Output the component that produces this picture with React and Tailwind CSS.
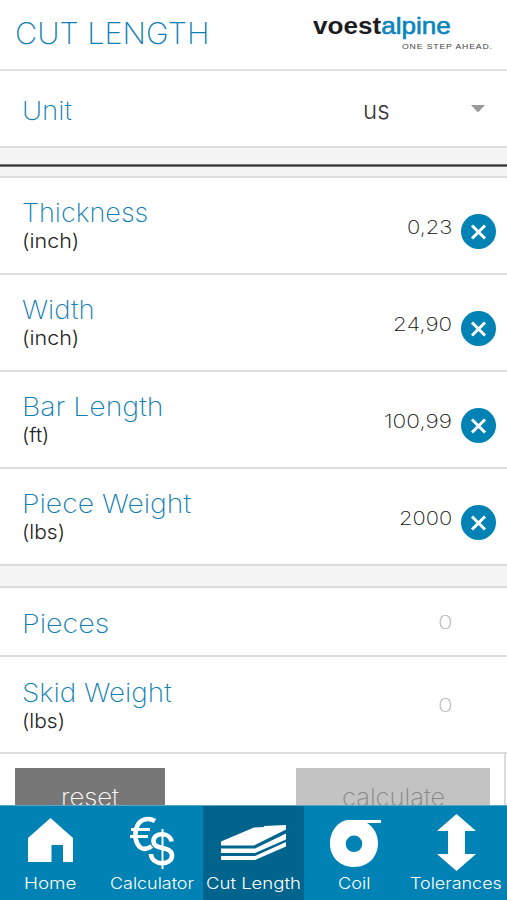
import { useLayoutEffect, useRef, useState } from "react";

const inputs = [
  { label: "Thickness", unit: "(inch)", value: "0,23", w: 126, uw: 57, vw: 45 },
  { label: "Width", unit: "(inch)", value: "24,90", w: 73, uw: 57, vw: 59 },
  { label: "Bar Length", unit: "(ft)", value: "100,99", w: 141, uw: 27, vw: 68 },
  { label: "Piece Weight", unit: "(lbs)", value: "2000", w: 169, uw: 43, vw: 53 },
];

// Stretches a line of text to the wide proportions of the corporate typeface
function Wide({ width, right, className = "", children }) {
  const ref = useRef(null);
  const [scale, setScale] = useState(1);

  useLayoutEffect(() => {
    setScale(width / ref.current.offsetWidth);
  }, [width]);

  return (
    <span className={`flex ${right ? "justify-end" : ""}`} style={{ width }}>
      <span
        ref={ref}
        className={`shrink-0 whitespace-nowrap ${
          right ? "origin-right" : "origin-left"
        } ${className}`}
        style={{ transform: `scaleX(${scale})` }}>
        {children}
      </span>
    </span>
  );
}

function Label({ text, width }) {
  return (
    <Wide
      width={width}
      className="text-[26px] leading-[29px] font-extralight text-[#0f80b3]">
      {text}
    </Wide>
  );
}

function Unit({ text, width }) {
  return (
    <Wide
      width={width}
      className="text-[20px] leading-[28px] font-light text-[#222]">
      {text}
    </Wide>
  );
}

function ClearButton() {
  return (
    <button className="flex size-[35px] items-center justify-center rounded-full bg-[#0082b4]">
      <svg viewBox="0 0 35 35" className="size-[35px]">
        <path
          d="M11 11.500 L24 24.500 M24 11.500 L11 24.500"
          stroke="#fff"
          strokeWidth="3"
        />
      </svg>
    </button>
  );
}

function HomeIcon() {
  return (
    <svg width="45" height="44" viewBox="0 0 45 44" fill="#fff">
      <path d="M22.500 0 L45 20 V44 H35 V27 H23.500 V44 H0 V20 Z" />
    </svg>
  );
}

function CurrencyIcon() {
  return (
    <svg width="46" height="54" viewBox="0 0 46 54" fill="none" stroke="#fff">
      <path
        d="M26 5 C19 1 10 3 7.500 12 C5 20 7 28 11.500 31.500 C15 34 19 33 23 30"
        strokeWidth="4.600"
      />
      <path d="M2 13.500 H21 M1 20.500 H19" strokeWidth="3" />
      <path
        d="M42.500 25.500 C41 16 24.500 16 24.500 25 C24.500 35 43 29 43 39.500 C43 50 22.500 50 22 38"
        stroke="#0082b4"
        strokeWidth="6.500"
      />
      <path
        d="M42.500 25.500 C41 16 24.500 16 24.500 25 C24.500 35 43 29 43 39.500 C43 50 22.500 50 22 38"
        strokeWidth="4.600"
      />
      <path d="M33.500 13 V53" strokeWidth="2" />
    </svg>
  );
}

function SheetsIcon() {
  return (
    <svg width="65" height="36" viewBox="0 0 65 36" fill="#fff">
      <path d="M0 16.500 L33 2.500 L43 2 V1 L65 0 V4.500 L33 20.500 H0 Z" />
      <path d="M0 23.500 H34 L65 8.500 V14.500 L34 28 H0 Z" />
      <path d="M0 31 H34 L65 17 V21.500 L34 35 H0 Z" />
    </svg>
  );
}

function CoilIcon() {
  return (
    <svg width="51" height="47" viewBox="0 0 51 47" fill="#fff">
      <path
        fillRule="evenodd"
        d="M18 0 H51 V3 H37 C44 7 48 15 48 23 C48 36 39 47 24 47 C10 47 0 37 0 24 C0 11 8 1 18 0 Z M24 15.500 A8.300 8.300 0 1 0 24 32.100 A8.300 8.300 0 1 0 24 15.500 Z"
      />
    </svg>
  );
}

function ArrowsIcon() {
  return (
    <svg width="39" height="57" viewBox="0 0 39 57" fill="#fff">
      <path d="M19.500 0 L39 17 H28 V40 H39 L19.500 57 L0 40 H11 V17 H0 Z" />
    </svg>
  );
}

const tabs = [
  { name: "Home", Icon: HomeIcon, w: 53, pad: "pt-[12px]" },
  { name: "Calculator", Icon: CurrencyIcon, w: 84, pad: "pt-[10px]" },
  { name: "Cut Length", Icon: SheetsIcon, w: 95, pad: "pt-[19px]", active: true },
  { name: "Coil", Icon: CoilIcon, w: 33, pad: "pt-[14px] pl-[2px]" },
  { name: "Tolerances", Icon: ArrowsIcon, w: 92, pad: "pt-[8px]" },
];

function App() {
  return (
    <main className="flex h-[900px] w-[507px] flex-col overflow-hidden bg-white font-['Inter',sans-serif]">
      <header className="flex h-[71px] shrink-0 justify-between border-b-2 border-[#e0e0e0] pr-[14px] pl-[15px]">
        <h1 className="pt-[15px]">
          <Wide
            width={195}
            className="text-[30px] leading-[36px] font-extralight text-[#0f80b3]">
            CUT LENGTH
          </Wide>
        </h1>
        <div className="flex w-[181px] flex-col pt-[13px]">
          <Wide
            width={139}
            className="pl-px font-['Liberation_Sans'] text-[24px] leading-[26px] font-bold text-[#1c1c20]">
            voest
            <span className="font-normal text-[#0a84bd] [-webkit-text-stroke:0.6px_#0a84bd]">
              alpine
            </span>
          </Wide>
          <div className="flex justify-end">
            <Wide
              width={91}
              className="font-['Liberation_Sans'] text-[8px] leading-[15px] tracking-widest text-[#444]">
              ONE STEP AHEAD.
            </Wide>
          </div>
        </div>
      </header>

      <section className="flex h-[77px] shrink-0 items-center border-b-2 border-[#dcdcdc] pr-[22px] pl-[22px]">
        <div className="grow pt-[3px]">
          <Label text="Unit" width={50} />
        </div>
        <div className="pt-[3px]">
          <Wide
            width={27}
            className="text-[24px] leading-[29px] font-light text-[#333]">
            us
          </Wide>
        </div>
        <svg width="14" height="8" viewBox="0 0 14 8" className="ml-[81px]">
          <path d="M0 0 H14 L7 7.500 Z" fill="#999" />
        </svg>
      </section>

      <div className="h-[30px] shrink-0 border-b-2 border-[#dcdcdc] bg-[#f4f4f4] pt-[16px]">
        <div className="h-[3px] border-y border-[#777] bg-[#333]" />
      </div>

      {inputs.map(({ label, unit, value, w, uw, vw }) => (
        <section
          key={label}
          className="flex h-[97px] shrink-0 items-start border-b-2 border-[#dcdcdc] pr-[11px] pl-[22px]">
          <div className="grow pt-[20px]">
            <Label text={label} width={w} />
            <Unit text={unit} width={uw} />
          </div>
          <div className="pt-[37px]">
            <Wide
              width={vw}
              right
              className="text-[19px] leading-[26px] font-extralight text-[#111]">
              {value}
            </Wide>
          </div>
          <div className="pt-[36px] pl-[9px]">
            <ClearButton />
          </div>
        </section>
      ))}

      <div className="h-[22px] shrink-0 border-b-2 border-[#dcdcdc] bg-[#f4f4f4]" />

      <section className="flex h-[69px] shrink-0 items-center justify-between border-b-2 border-[#dcdcdc] pt-[3px] pr-[55px] pl-[22px]">
        <Label text="Pieces" width={87} />
        <Wide
          width={14}
          className="text-[19px] leading-[26px] font-extralight text-[#b5b5b5]">
          0
        </Wide>
      </section>

      <section className="flex h-[97px] shrink-0 items-center justify-between border-b-2 border-[#dcdcdc] pt-[3px] pr-[55px] pl-[22px]">
        <div>
          <Label text="Skid Weight" width={150} />
          <Unit text="(lbs)" width={43} />
        </div>
        <Wide
          width={14}
          className="text-[19px] leading-[26px] font-extralight text-[#b5b5b5]">
          0
        </Wide>
      </section>

      <section className="mr-[1px] flex h-[51px] shrink-0 justify-between overflow-hidden border-r-2 border-[#dcdcdc] pt-[14px] pr-[14px] pl-[15px]">
        <button className="flex h-[60px] w-[150px] justify-center bg-[#777] pt-[15px]">
          <Wide
            width={58}
            className="text-[24px] leading-[30px] font-extralight text-white">
            reset
          </Wide>
        </button>
        <button className="flex h-[60px] w-[194px] justify-center bg-[#c3c3c3] pt-[15px]">
          <Wide
            width={103}
            className="text-[24px] leading-[30px] font-extralight text-[#888]">
            calculate
          </Wide>
        </button>
      </section>

      <nav className="grid h-[96px] shrink-0 grid-cols-5 border-t border-[#5aa5c4] bg-[#0082b4]">
        {tabs.map(({ name, Icon, w, pad, active }) => (
          <a
            key={name}
            className={`flex flex-col items-center ${
              active ? "bg-[#00648c]" : ""
            }`}>
            <div className={`flex h-[66px] items-start ${pad}`}>
              <Icon />
            </div>
            <Wide
              width={w}
              className="text-[16px] leading-[22px] font-light text-white">
              {name}
            </Wide>
          </a>
        ))}
      </nav>
    </main>
  );
}

export default App;
